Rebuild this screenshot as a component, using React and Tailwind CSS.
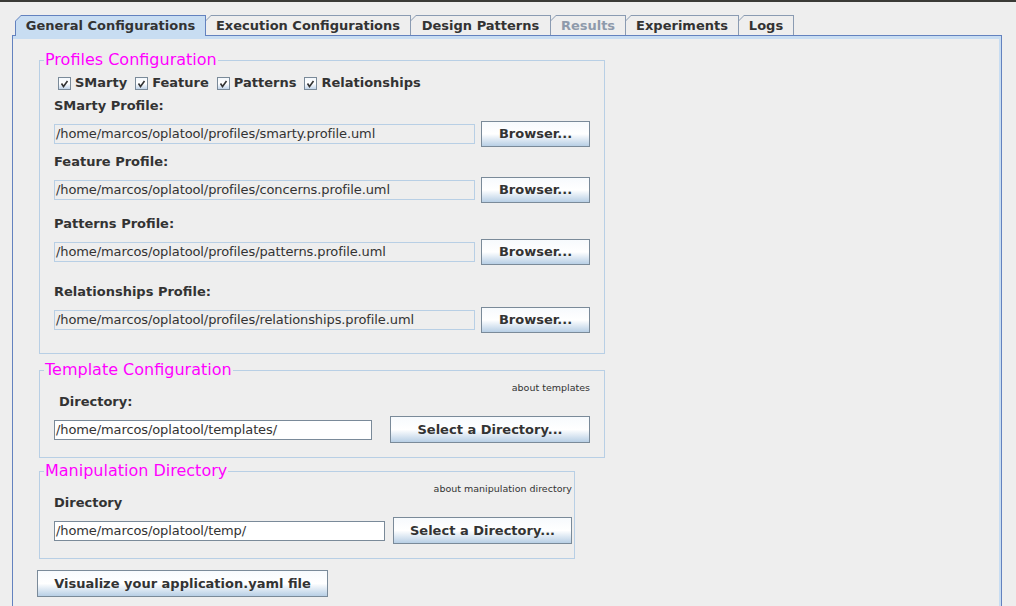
import React from 'react'

const font = "font-['DejaVu_Sans',Verdana,sans-serif]"

const tabs = [
  { label: 'General Configurations', w: 'w-[191px]', selected: true },
  { label: 'Execution Configurations', w: 'w-[206px]' },
  { label: 'Design Patterns', w: 'w-[141px]' },
  { label: 'Results', w: 'w-[76px]', disabled: true },
  { label: 'Experiments', w: 'w-[114px]' },
  { label: 'Logs', w: 'w-[56px]' },
]

function Tab({ label, w, selected, disabled }) {
  return (
    <div className={`${w} -ml-px first:ml-0 ${selected ? 'relative z-10 h-[21px]' : 'h-[20px]'}`}>
      <div
        className={
          'h-full px-px pt-px [clip-path:polygon(6px_0,100%_0,100%_100%,0_100%,0_6px)] ' +
          (selected ? 'bg-[#6382bf]' : 'bg-[#8a9bb2]')
        }
      >
        <div
          className={
            'flex h-full items-start justify-center pt-[2px] text-[13px] font-bold leading-[16px] [clip-path:polygon(5px_0,100%_0,100%_100%,0_100%,0_5px)] ' +
            (selected ? 'bg-[#c8ddf2] ' : 'bg-[#eeeeee] ') +
            (disabled ? 'text-[#8e9aab]' : 'text-[#333333]')
          }
        >
          {label}
        </div>
      </div>
    </div>
  )
}

function Check({ label }) {
  return (
    <label className="flex items-center gap-[4px]">
      <span className="flex h-[13px] w-[13px] items-center justify-center border border-[#7a8a99] bg-gradient-to-b from-[#f4f8fc] via-[#ffffff] to-[#c2d5ea]">
        <svg width="9" height="9" viewBox="0 0 9 9">
          <path d="M1.5 4.5 L3.5 7.5 L7.5 2" fill="none" stroke="#333333" strokeWidth="1.6" />
        </svg>
      </span>
      <span className="text-[13px] font-bold leading-[16px] text-[#333333]">{label}</span>
    </label>
  )
}

function Button({ children, w, h = 'h-[26px]' }) {
  return (
    <button
      type="button"
      className={`${w} ${h} flex items-center justify-center border border-[#7a8a99] bg-gradient-to-b from-[#f7fafd] via-[#ffffff] to-[#b8cfe5] text-[13px] font-bold text-[#333333]`}
    >
      {children}
    </button>
  )
}

function Field({ value, w, editable }) {
  return (
    <div
      className={
        `${w} flex h-[20px] items-center overflow-hidden whitespace-nowrap border pl-[1px] text-[13px] leading-[16px] tracking-[-0.1px] text-[#333333] ` +
        (editable ? 'border-[#7a8a99] bg-white' : 'border-[#b8cfe5] bg-[#eeeeee]')
      }
    >
      {value}
    </div>
  )
}

function Label({ children, className = '' }) {
  return (
    <div className={`h-[16px] text-[13px] font-bold leading-[16px] text-[#333333] ${className}`}>
      {children}
    </div>
  )
}

function Hint({ children }) {
  return <div className="text-right text-[9.5px] leading-[12px] text-[#333333]">{children}</div>
}

function Group({ title, className = '', children }) {
  return (
    <fieldset className={`border border-[#b8cfe5] pl-[14px] ${className}`}>
      <legend className="-ml-[10px] px-px text-[16px] leading-[18px] text-[#ff00ff]">{title}</legend>
      {children}
    </fieldset>
  )
}

const profiles = [
  { label: 'SMarty Profile:', path: '/home/marcos/oplatool/profiles/smarty.profile.uml', mt: 'mt-[7px]' },
  { label: 'Feature Profile:', path: '/home/marcos/oplatool/profiles/concerns.profile.uml', mt: 'mt-[7px]' },
  { label: 'Patterns Profile:', path: '/home/marcos/oplatool/profiles/patterns.profile.uml', mt: 'mt-[13px]' },
  { label: 'Relationships Profile:', path: '/home/marcos/oplatool/profiles/relationships.profile.uml', mt: 'mt-[19px]' },
]

export default function App() {
  return (
    <div className={`h-[606px] w-[1016px] overflow-hidden bg-[#eeeeee] ${font}`}>
      <div className="h-[2px] bg-[#3a3a36]" />
      <div className="pt-[13px]">
        <div className="flex h-[20px] items-start pl-[15px]">
          {tabs.map(t => (
            <Tab key={t.label} {...t} />
          ))}
        </div>

        <div className="ml-[12px] h-[600px] w-[990px] border border-[#6382bf]">
          <div className="h-full border-r-[2px] border-t-[3px] border-[#c8ddf2] pl-[26px] pt-[12px]">
            <Group title="Profiles Configuration" className="w-[566px] pb-[20px] pr-[14px] pt-[6px]">
              <div className="ml-[4px] flex items-center gap-[8px]">
                <Check label="SMarty" />
                <Check label="Feature" />
                <Check label="Patterns" />
                <Check label="Relationships" />
              </div>
              {profiles.map(p => (
                <div key={p.label} className={p.mt}>
                  <Label>{p.label}</Label>
                  <div className="mt-[7px] flex items-center justify-between">
                    <Field value={p.path} w="w-[421px]" />
                    <Button w="w-[109px]">Browser...</Button>
                  </div>
                </div>
              ))}
            </Group>

            <Group title="Template Configuration" className="mt-[7px] w-[566px] pb-[14px] pr-[14px] pt-[3px]">
              <Hint>about templates</Hint>
              <Label className="ml-[5px]">Directory:</Label>
              <div className="mt-[6px] flex items-center justify-between">
                <Field value="/home/marcos/oplatool/templates/" w="w-[318px]" editable />
                <Button w="w-[200px]" h="h-[27px]">Select a Directory...</Button>
              </div>
            </Group>

            <Group title="Manipulation Directory" className="mt-[4px] w-[536px] pb-[14px] pr-[2px] pt-[3px]">
              <Hint>about manipulation directory</Hint>
              <Label>Directory</Label>
              <div className="mt-[6px] flex items-center justify-between">
                <Field value="/home/marcos/oplatool/temp/" w="w-[331px]" editable />
                <Button w="w-[179px]" h="h-[27px]">Select a Directory...</Button>
              </div>
            </Group>

            <div className="ml-[-2px] mt-[11px]">
              <Button w="w-[291px]" h="h-[27px]">Visualize your application.yaml file</Button>
            </div>
          </div>
        </div>
      </div>
    </div>
  )
}
